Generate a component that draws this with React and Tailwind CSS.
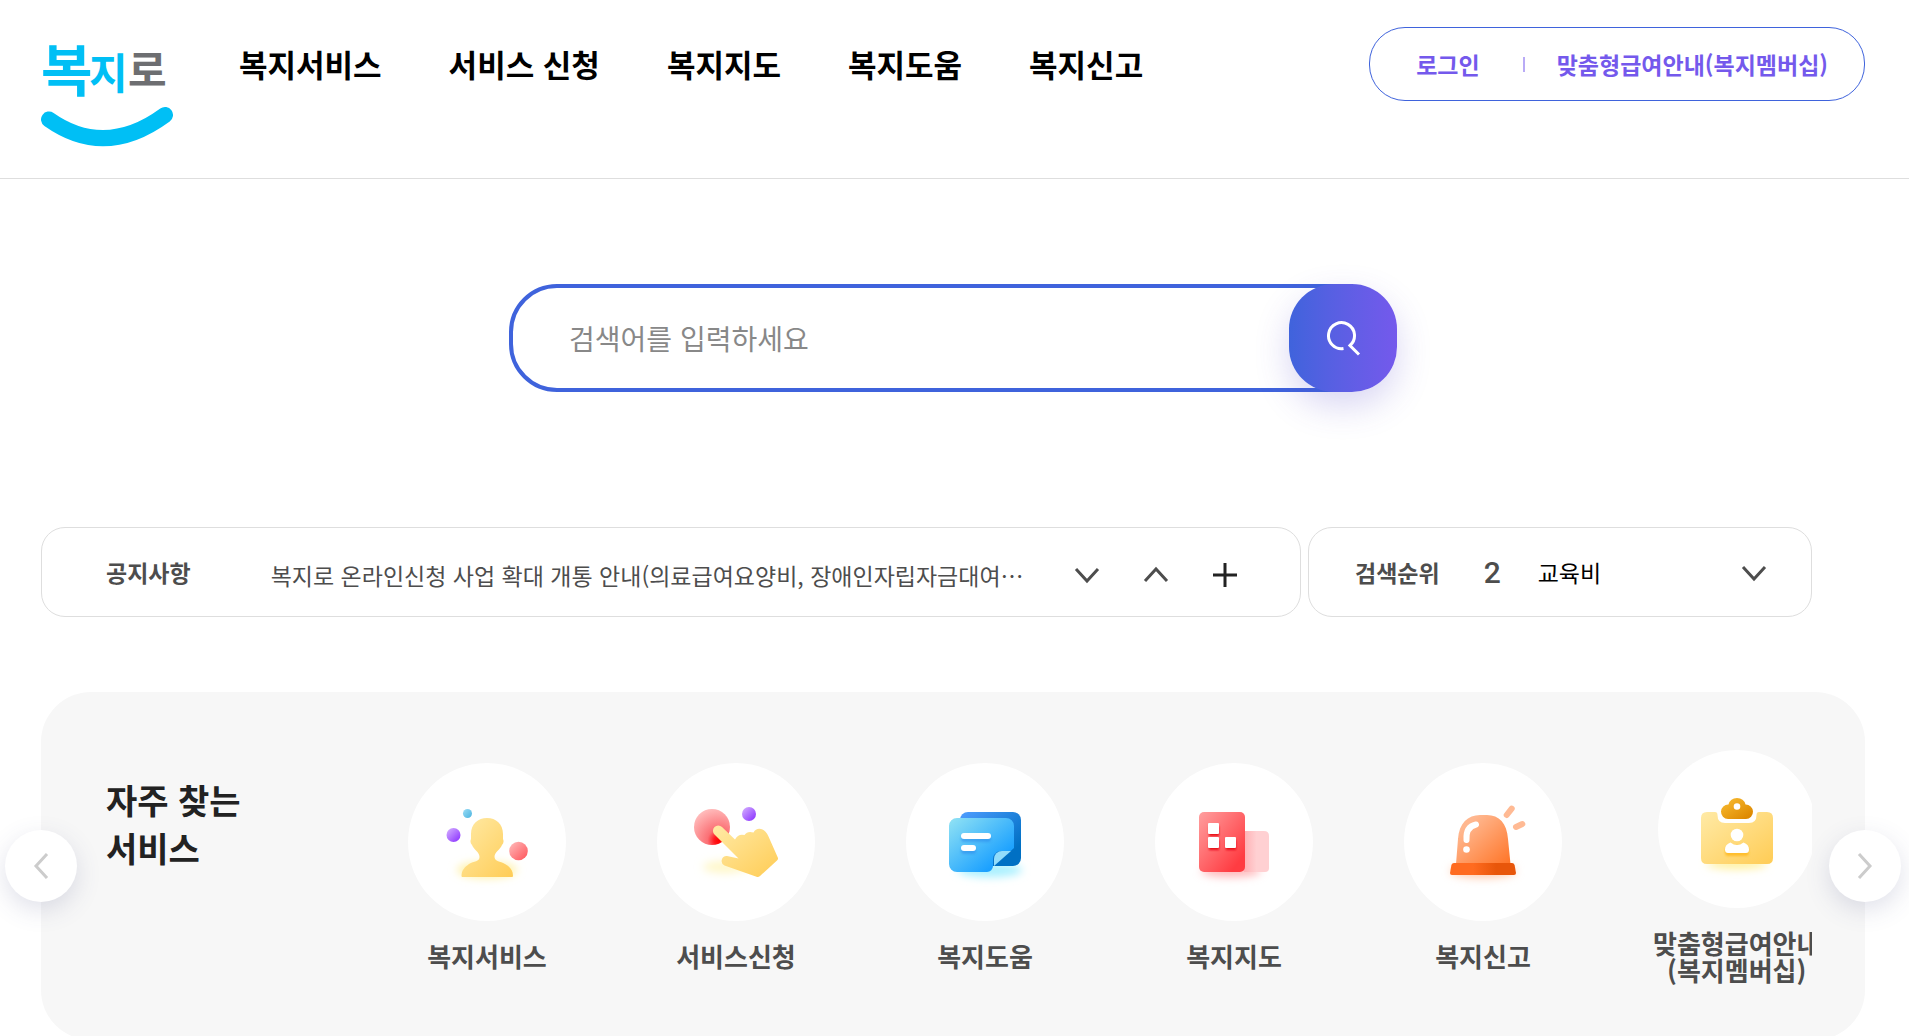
const menus = ["복지서비스", "서비스 신청", "복지지도", "복지도움", "복지신고"];

function Logo() {
  return (
    <svg viewBox="0 0 132 120" className="h-[120px] w-[132px]" role="img" aria-label="복지로">
      <g fontFamily="'Noto Sans CJK KR', sans-serif" fontWeight="700">
        <text x="0" y="64" fontSize="56" fill="#00bff5">복</text>
        <text x="48" y="62" fontSize="42" fill="#00bff5">지</text>
        <text x="87" y="59" fontSize="42" fill="#6d6e71">로</text>
      </g>
      <path d="M8 92.500Q64 132 124 88" fill="none" stroke="#00bff5" strokeWidth="16" strokeLinecap="round" />
    </svg>
  );
}

function Chevron({ direction, className }) {
  const paths = {
    down: "M2 6L13 18L24 6",
    up: "M2 18L13 6L24 18",
    left: "M19 1L8 13L19 25",
    right: "M7 1L18 13L7 25",
  };
  return (
    <svg viewBox="0 0 26 26" className={className} fill="none" stroke="currentColor" strokeWidth="3" aria-hidden="true">
      <path d={paths[direction]} />
    </svg>
  );
}

function Gradients() {
  return (
    <svg className="absolute h-0 w-0" aria-hidden="true">
      <defs>
        <linearGradient id="yellow" x1="0" y1="0" x2="1" y2="1">
          <stop offset="0" stopColor="#ffeaa6" />
          <stop offset="1" stopColor="#ffcc55" />
        </linearGradient>
        <linearGradient id="purple" x1="0" y1="0" x2="1" y2="1">
          <stop offset="0.1" stopColor="#cfa6ff" />
          <stop offset="0.8" stopColor="#9747ff" />
        </linearGradient>
        <linearGradient id="sky" x1="0" y1="0" x2="1" y2="1">
          <stop offset="0" stopColor="#9adcf5" />
          <stop offset="1" stopColor="#4bb4e0" />
        </linearGradient>
        <linearGradient id="rose" x1="0" y1="0" x2="1" y2="1">
          <stop offset="0.1" stopColor="#ffb3b3" />
          <stop offset="0.9" stopColor="#ff5c62" />
        </linearGradient>
        <radialGradient id="press" cx="0.7" cy="0.88" r="0.9">
          <stop offset="0" stopColor="#ff0000" />
          <stop offset="0.16" stopColor="#ff1a1f" />
          <stop offset="0.36" stopColor="#fb7075" />
          <stop offset="1" stopColor="#ffb9b9" />
        </radialGradient>
        <linearGradient id="note" x1="0" y1="0" x2="1" y2="1">
          <stop offset="0" stopColor="#92e3f4" />
          <stop offset="0.8" stopColor="#189fff" />
        </linearGradient>
        <linearGradient id="noteBack" x1="0" y1="0" x2="1" y2="1">
          <stop offset="0" stopColor="#4f9dff" />
          <stop offset="0.8" stopColor="#0070c4" />
        </linearGradient>
        <linearGradient id="red" x1="0" y1="0" x2="1" y2="1">
          <stop offset="0" stopColor="#ff9f9f" />
          <stop offset="0.85" stopColor="#ff3c42" />
        </linearGradient>
        <linearGradient id="pink" x1="0" y1="0" x2="1" y2="0">
          <stop offset="0" stopColor="#ffb0b4" />
          <stop offset="0.5" stopColor="#ffd0d2" />
        </linearGradient>
        <linearGradient id="orange" x1="0" y1="0" x2="1" y2="1">
          <stop offset="0.2" stopColor="#ffb78f" />
          <stop offset="1" stopColor="#ff7426" />
        </linearGradient>
        <linearGradient id="base" x1="0" y1="0" x2="1" y2="0">
          <stop offset="0.35" stopColor="#ff6b20" />
          <stop offset="0.7" stopColor="#e8560a" />
        </linearGradient>
        <linearGradient id="gold" x1="0" y1="0" x2="1" y2="1">
          <stop offset="0.1" stopColor="#f7b92f" />
          <stop offset="0.9" stopColor="#dd8800" />
        </linearGradient>
        <filter id="glow" x="-50%" y="-100%" width="200%" height="300%">
          <feGaussianBlur stdDeviation="4" />
        </filter>
        <filter id="drop" x="-50%" y="-50%" width="200%" height="200%">
          <feGaussianBlur stdDeviation="1.2" />
        </filter>
      </defs>
    </svg>
  );
}

function PersonIcon() {
  return (
    <>
      <ellipse cx="79" cy="107" rx="30" ry="8" fill="#fff2a8" filter="url(#glow)" />
      <circle cx="59.500" cy="50.500" r="4.500" fill="url(#sky)" />
      <circle cx="45.500" cy="72" r="7" fill="url(#purple)" />
      <circle cx="110.500" cy="88" r="9.300" fill="url(#rose)" />
      <path
        d="M63 71C63 61 70 55 79 55S95 61 95 71V76Q96.500 79 94 82C92 87 86.500 89 86.500 94C87 99 92 98 97 101C102 104 105 107 105 113Q105 114 104 114H54.500Q53.500 114 53.500 113C53.500 107 57 104 61 101C66 98 71.500 99 71.500 94C71.500 89 66 87 64 82Q61.500 79 63 76Z"
        fill="url(#yellow)"
      />
    </>
  );
}

function TouchIcon() {
  return (
    <>
      <ellipse cx="68" cy="104" rx="22" ry="6" fill="#fff7c8" filter="url(#glow)" />
      <circle cx="55" cy="64" r="18" fill="url(#press)" />
      <circle cx="92" cy="51" r="7" fill="url(#purple)" />
      <path
        d="M57.500 71.500A5.200 5.200 0 0 1 65 64L78 76.500Q81 70.500 87.500 72Q90.500 67.500 96.500 69.500Q99 65 104 66Q108.500 67 111.500 73.500L121 95Q121.300 96.500 120 97.500L103 113Q101.500 114.300 99.500 113.700L67.500 102.500A5 5 0 0 1 70 93L81.500 95.500Z"
        fill="url(#yellow)"
      />
    </>
  );
}

function NoteIcon() {
  return (
    <>
      <ellipse cx="84" cy="107" rx="32" ry="7" fill="#a8f0ff" filter="url(#glow)" />
      <rect x="54" y="49" width="61" height="54" rx="8" fill="url(#noteBack)" />
      <path d="M51 55H100A8 8 0 0 1 108 63V85L104.700 88H95A8 8 0 0 0 87 96V103A6 6 0 0 1 81 109H51A8 8 0 0 1 43 101V63A8 8 0 0 1 51 55Z" fill="url(#note)" />
      <path d="M88 103V96A8 8 0 0 1 96 88H105Z" fill="#92dcfb" />
      <g fill="#2b86e8" opacity="0.5" filter="url(#drop)">
        <rect x="55" y="73" width="30" height="6" rx="3" />
        <rect x="55" y="85" width="15" height="6" rx="3" />
      </g>
      <g fill="#fff">
        <rect x="55" y="70" width="30" height="6" rx="3" />
        <rect x="55" y="82" width="15" height="6" rx="3" />
      </g>
    </>
  );
}

function BuildingIcon() {
  return (
    <>
      <ellipse cx="76" cy="108" rx="30" ry="6" fill="#ffb5b8" filter="url(#glow)" />
      <path d="M89 68H109Q114 68 114 73V105Q114 109 110 109H89Z" fill="url(#pink)" />
      <rect x="44" y="49" width="46" height="60" rx="5" fill="url(#red)" />
      <g fill="#e81018" filter="url(#drop)">
        <rect x="54" y="63" width="10" height="10" />
        <rect x="54" y="77" width="10" height="10" />
        <rect x="71" y="77" width="10" height="10" />
      </g>
      <g fill="#fff">
        <rect x="53" y="60" width="11" height="11" rx="1" />
        <rect x="53" y="74" width="11" height="11" rx="1" />
        <rect x="70" y="74" width="11" height="11" rx="1" />
      </g>
    </>
  );
}

function SirenIcon() {
  return (
    <>
      <ellipse cx="79" cy="108" rx="33" ry="7" fill="#ffcdb0" filter="url(#glow)" />
      <path d="M52 101L54 76C55 60 64 52 76 52H83C95 52 103 60 104 76L106.500 101Z" fill="url(#orange)" />
      <path d="M50 100H108Q110 100 110.600 102L112 110Q112 112 110 112H48Q46 112 46 110L47.400 102Q48 100 50 100Z" fill="url(#base)" />
      <path d="M62.500 77Q61.500 64 72 61.500" fill="none" stroke="#fff" strokeWidth="6" strokeLinecap="round" />
      <circle cx="62.500" cy="86.500" r="3.300" fill="#fff" />
      <path d="M102.700 52L107.700 45.700M112 64L118.300 61" stroke="#ffba94" strokeWidth="6" strokeLinecap="round" />
    </>
  );
}

function BadgeIcon() {
  return (
    <>
      <ellipse cx="79" cy="114" rx="30" ry="5" fill="#fff099" filter="url(#glow)" />
      <path d="M49 62H57Q59.500 62 59.500 65Q59.500 73 67 73H91Q98.500 73 98.500 65Q98.500 62 101 62H109Q115 62 115 68V108Q115 114 109 114H49Q43 114 43 108V68Q43 62 49 62Z" fill="url(#yellow)" />
      <path
        fillRule="evenodd"
        d="M70 69A7.200 7.200 0 0 1 70.500 54.500A8.800 8.800 0 0 1 87.500 54.500A7.200 7.200 0 0 1 88 69ZM79 53.200A3.300 3.300 0 1 0 79 59.800A3.300 3.300 0 1 0 79 53.200Z"
        fill="url(#gold)"
      />
      <path d="M67 99Q79 92 91 99V102Q91 106 88 106H70Q67 106 67 102Z" fill="#ffbe2e" filter="url(#drop)" />
      <circle cx="79" cy="85" r="6.300" fill="#fff" />
      <path d="M72.500 92.500Q79 97.500 85.500 92.500Q91 94.500 91 99.500Q91 103 88 103H70Q67 103 67 99.500Q67 94.500 72.500 92.500Z" fill="#fff" />
    </>
  );
}

const services = [
  { name: "복지서비스", Icon: PersonIcon },
  { name: "서비스신청", Icon: TouchIcon },
  { name: "복지도움", Icon: NoteIcon },
  { name: "복지지도", Icon: BuildingIcon },
  { name: "복지신고", Icon: SirenIcon },
  { name: "맞춤형급여안내", sub: "(복지멤버십)", Icon: BadgeIcon },
];

function Header() {
  return (
    <header className="flex items-start border-b border-[#dedede] pt-[27px] pr-11 pb-[31px] pl-[41px]">
      <a href="#home">
        <Logo />
      </a>
      <nav className="ml-[66px] flex gap-[67px] pt-3.5">
        {menus.map((menu) => (
          <a key={menu} href="#menu" className="text-[31px] leading-[46px] font-bold whitespace-nowrap text-black">
            {menu}
          </a>
        ))}
      </nav>
      <div className="ml-auto flex h-[74px] items-center rounded-[36px] border border-[#3f63dc] pr-9 pl-[46px] text-[23px] font-bold whitespace-nowrap text-[#7459ec]">
        <a href="#login">로그인</a>
        <span className="mr-8 ml-[43px] h-[15px] w-0.5 bg-[#b9abf6]" />
        <a href="#membership">맞춤형급여안내(복지멤버십)</a>
      </div>
    </header>
  );
}

function SearchForm() {
  return (
    <form className="mx-auto flex h-[108px] w-full max-w-[888px]" onSubmit={(event) => event.preventDefault()}>
      <input
        type="text"
        aria-label="검색어"
        placeholder="검색어를 입력하세요"
        className="-mr-[60px] min-w-0 flex-1 rounded-l-[48px] border-4 border-[#3f63dc] bg-white pr-20 pl-14 text-[28px] text-[#222] outline-none placeholder:text-[#888]"
      />
      <button
        type="submit"
        aria-label="검색"
        className="relative flex size-[108px] items-center justify-center rounded-[45px] bg-linear-to-r from-[#3f63dc] to-[#7459ec] shadow-[0_14px_34px_rgba(80,70,200,0.22)]"
      >
        <svg viewBox="0 0 36 36" className="size-9" fill="none" stroke="#fff" strokeWidth="3" aria-hidden="true">
          <path d="M18.500 28.500A13 13 0 1 1 25 25.500L34 34.500" />
        </svg>
      </button>
    </form>
  );
}

function NoticeBar() {
  return (
    <div className="mt-[135px] mr-[53px] flex gap-[7px] whitespace-nowrap">
      <section className="flex h-[90px] min-w-0 flex-1 items-center rounded-3xl border border-[#dedede] pr-[62px] pl-16 text-[23px] text-[#4d4d4d]">
        <h2 className="font-bold">공지사항</h2>
        <a href="#notice" className="ml-20 min-w-0 truncate pt-1.5">
          복지로 온라인신청 사업 확대 개통 안내(의료급여요양비, 장애인자립자금대여⋯
        </a>
        <div className="ml-auto flex gap-[43px] pt-2 text-[#4d4d4d]">
          <button type="button" aria-label="다음 공지">
            <Chevron direction="down" className="size-[26px]" />
          </button>
          <button type="button" aria-label="이전 공지">
            <Chevron direction="up" className="size-[26px]" />
          </button>
          <button type="button" aria-label="공지사항 더보기" className="text-[#222]">
            <svg viewBox="0 0 26 26" className="size-[26px]" stroke="currentColor" strokeWidth="3" aria-hidden="true">
              <path d="M13 0V24M1 12H25" />
            </svg>
          </button>
        </div>
      </section>
      <section className="flex h-[90px] w-[504px] items-center rounded-3xl border border-[#dedede] pr-11 pl-[46px] text-[23px] text-[#4d4d4d]">
        <h2 className="font-bold">검색순위</h2>
        <span className="ml-11 font-[Roboto] text-[30px] font-medium">2</span>
        <a href="#rank" className="ml-[37px] text-black">
          교육비
        </a>
        <button type="button" aria-label="검색순위 펼치기" className="ml-auto pt-1">
          <Chevron direction="down" className="size-[26px]" />
        </button>
      </section>
    </div>
  );
}

function ArrowButton({ direction, label, className }) {
  return (
    <button
      type="button"
      aria-label={label}
      className={`absolute top-1/2 flex size-[72px] -translate-y-1/2 items-center justify-center rounded-full bg-white text-[#ccc] shadow-[0_8px_24px_rgba(70,80,130,0.17)] ${className}`}
    >
      <Chevron direction={direction} className="size-[26px]" />
    </button>
  );
}

function FrequentServices() {
  return (
    <section className="relative mt-[75px] flex min-h-[348px] rounded-[50px] bg-[#f7f7f7] pr-[53px] pl-[65px]">
      <h2 className="w-[302px] shrink-0 pt-[84px] text-[34px] leading-[48px] font-bold text-[#222]">
        자주 찾는
        <br />
        서비스
      </h2>
      <ul className="flex min-w-0 flex-1 items-center gap-[91px] overflow-hidden">
        {services.map(({ name, sub, Icon }) => (
          <li key={name} className="min-w-[158px] shrink-0">
            <a href="#service" className="flex flex-col items-center gap-[21px] text-center text-[26px] leading-[27px] font-bold whitespace-nowrap text-[#4d4d4d]">
              <svg viewBox="0 0 158 158" className="size-[158px] rounded-full bg-white" aria-hidden="true">
                <Icon />
              </svg>
              <span>
                {name}
                {sub && <br />}
                {sub}
              </span>
            </a>
          </li>
        ))}
      </ul>
      <ArrowButton direction="left" label="이전" className="-left-9" />
      <ArrowButton direction="right" label="다음" className="-right-9" />
    </section>
  );
}

export default function App() {
  return (
    <div lang="ko" className="overflow-x-hidden bg-white font-['Noto_Sans_CJK_KR',sans-serif]">
      <Gradients />
      <Header />
      <main className="pt-[105px] pr-11 pl-[41px]">
        <SearchForm />
        <NoticeBar />
        <FrequentServices />
      </main>
    </div>
  );
}
